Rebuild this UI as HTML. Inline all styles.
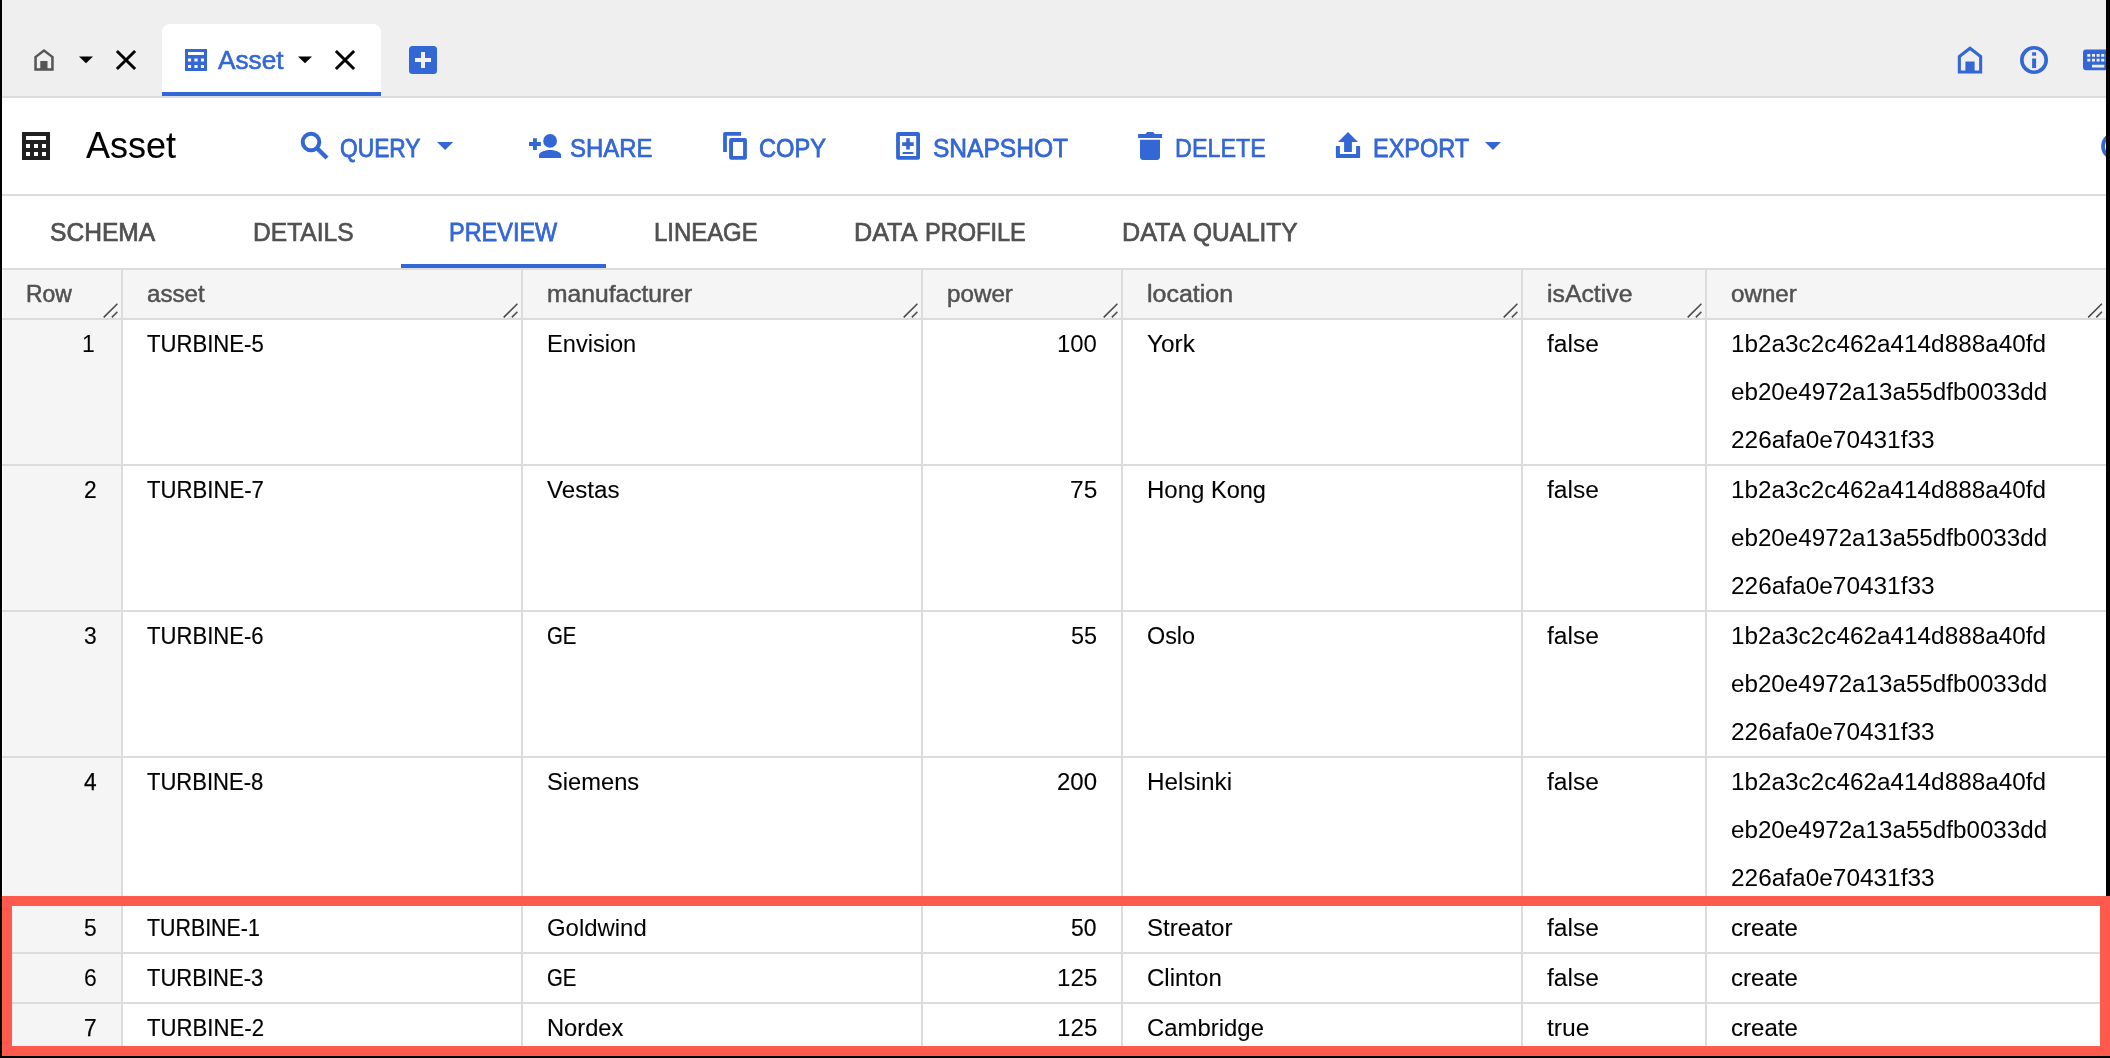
<!DOCTYPE html>
<html><head><meta charset="utf-8"><title>Asset</title>
<style>
html,body{margin:0;padding:0}
body{width:2110px;height:1058px;overflow:hidden;position:relative;background:#fff;font-family:"Liberation Sans",sans-serif}
.a{position:absolute}
.t{position:absolute;white-space:nowrap;line-height:1;transform-origin:0 0;-webkit-text-stroke-color:currentColor}
.g{background:#f5f5f5}
.b{background:#dcdcdc}
</style></head><body>
<div class="a" style="left:0px;top:0px;width:2110px;height:96px;background:#efefef"></div>
<div class="a" style="left:0px;top:96px;width:2110px;height:2px;background:#dcdcdc"></div>
<div class="a" style="left:162px;top:24px;width:219px;height:72px;background:#fff;border-radius:8px 8px 0 0"></div>
<div class="a" style="left:162px;top:92px;width:219px;height:4px;background:#3367d6"></div>
<div class="a" style="left:0px;top:194px;width:2110px;height:2px;background:#dcdcdc"></div>
<div class="a" style="left:0px;top:268px;width:2110px;height:2px;background:#dcdcdc"></div>
<div class="a" style="left:401px;top:264px;width:205px;height:4px;background:#3367d6"></div>
<div class="a g" style="left:3px;top:270px;width:2103px;height:48px;"></div>
<div class="a g" style="left:3px;top:320px;width:118px;height:738px;"></div>
<div class="a b" style="left:0px;top:318px;width:2110px;height:2px;"></div>
<div class="a b" style="left:0px;top:464px;width:2110px;height:2px;"></div>
<div class="a b" style="left:0px;top:610px;width:2110px;height:2px;"></div>
<div class="a b" style="left:0px;top:756px;width:2110px;height:2px;"></div>
<div class="a b" style="left:0px;top:902px;width:2110px;height:2px;"></div>
<div class="a b" style="left:0px;top:952px;width:2110px;height:2px;"></div>
<div class="a b" style="left:0px;top:1002px;width:2110px;height:2px;"></div>
<div class="a b" style="left:0px;top:1052px;width:2110px;height:2px;"></div>
<div class="a b" style="left:121px;top:270px;width:2px;height:788px;"></div>
<div class="a b" style="left:521px;top:270px;width:2px;height:788px;"></div>
<div class="a b" style="left:921px;top:270px;width:2px;height:788px;"></div>
<div class="a b" style="left:1121px;top:270px;width:2px;height:788px;"></div>
<div class="a b" style="left:1521px;top:270px;width:2px;height:788px;"></div>
<div class="a b" style="left:1705px;top:270px;width:2px;height:788px;"></div>
<div class="a" style="left:0;top:0;width:2110px;height:1058px;will-change:transform">
<span class="t" style="left:218.48px;top:47px;font-size:26.06px;color:#3367d6;-webkit-text-stroke-width:0.56px;transform:scaleX(1.0059)">Asset</span>
<span class="t" style="left:86.45px;top:127px;font-size:36.99px;color:#000;-webkit-text-stroke-width:0.08px;transform:scaleX(0.9739)">Asset</span>
<span class="t" style="left:340.47px;top:136px;font-size:25.76px;color:#3367d6;-webkit-text-stroke-width:0.79px;transform:scaleX(0.8838)">QUERY</span>
<span class="t" style="left:570.22px;top:136px;font-size:25.83px;color:#3367d6;-webkit-text-stroke-width:0.74px;transform:scaleX(0.9270)">SHARE</span>
<span class="t" style="left:758.81px;top:136px;font-size:25.75px;color:#3367d6;-webkit-text-stroke-width:0.80px;transform:scaleX(0.9189)">COPY</span>
<span class="t" style="left:933.26px;top:136px;font-size:25.77px;color:#3367d6;-webkit-text-stroke-width:0.78px;transform:scaleX(0.9527)">SNAPSHOT</span>
<span class="t" style="left:1174.76px;top:136px;font-size:25.93px;color:#3367d6;-webkit-text-stroke-width:0.66px;transform:scaleX(0.9019)">DELETE</span>
<span class="t" style="left:1372.82px;top:136px;font-size:25.76px;color:#3367d6;-webkit-text-stroke-width:0.79px;transform:scaleX(0.9111)">EXPORT</span>
<span class="t" style="left:50.19px;top:220px;font-size:25.83px;color:#515151;-webkit-text-stroke-width:0.74px;transform:scaleX(0.9523)">SCHEMA</span>
<span class="t" style="left:252.68px;top:220px;font-size:25.93px;color:#515151;-webkit-text-stroke-width:0.66px;transform:scaleX(0.9486)">DETAILS</span>
<span class="t" style="left:449.31px;top:220px;font-size:25.78px;color:#3367d6;-webkit-text-stroke-width:0.77px;transform:scaleX(0.9111)">PREVIEW</span>
<span class="t" style="left:654.26px;top:220px;font-size:25.84px;color:#515151;-webkit-text-stroke-width:0.73px;transform:scaleX(0.9256)">LINEAGE</span>
<span class="t" style="left:854.15px;top:220px;font-size:25.91px;color:#515151;-webkit-text-stroke-width:0.68px;transform:scaleX(0.9721)">DATA</span>
<span class="t" style="left:925.00px;top:220px;font-size:25.84px;color:#515151;-webkit-text-stroke-width:0.73px;transform:scaleX(0.9119)">PROFILE</span>
<span class="t" style="left:1122.15px;top:220px;font-size:25.91px;color:#515151;-webkit-text-stroke-width:0.68px;transform:scaleX(0.9721)">DATA</span>
<span class="t" style="left:1193.08px;top:220px;font-size:25.82px;color:#515151;-webkit-text-stroke-width:0.75px;transform:scaleX(0.9461)">QUALITY</span>
<span class="t" style="left:26.14px;top:282px;font-size:24.00px;color:#515151;-webkit-text-stroke-width:0.56px;transform:scaleX(0.9531)">Row</span>
<span class="t" style="left:147.22px;top:282px;font-size:24.10px;color:#515151;-webkit-text-stroke-width:0.48px;transform:scaleX(1.0012)">asset</span>
<span class="t" style="left:547.11px;top:282px;font-size:24.10px;color:#515151;-webkit-text-stroke-width:0.48px;transform:scaleX(1.0227)">manufacturer</span>
<span class="t" style="left:947.18px;top:282px;font-size:24.11px;color:#515151;-webkit-text-stroke-width:0.48px;transform:scaleX(1.0034)">power</span>
<span class="t" style="left:1147.29px;top:282px;font-size:24.11px;color:#515151;-webkit-text-stroke-width:0.48px;transform:scaleX(1.0360)">location</span>
<span class="t" style="left:1547.16px;top:282px;font-size:24.12px;color:#515151;-webkit-text-stroke-width:0.47px;transform:scaleX(1.0286)">isActive</span>
<span class="t" style="left:1731.21px;top:282px;font-size:24.12px;color:#515151;-webkit-text-stroke-width:0.47px;transform:scaleX(1.0028)">owner</span>
<span class="t" style="left:82.07px;top:332px;font-size:24.73px;color:#000;-webkit-text-stroke-width:0.00px;transform:scaleX(0.9300)">1</span>
<span class="t" style="left:147.20px;top:332px;font-size:24.47px;color:#000;-webkit-text-stroke-width:0.20px;transform:scaleX(0.9039)">TURBINE-5</span>
<span class="t" style="left:547.09px;top:332px;font-size:24.66px;color:#000;-webkit-text-stroke-width:0.06px;transform:scaleX(0.9576)">Envision</span>
<span class="t" style="left:1056.72px;top:332px;font-size:24.73px;color:#000;-webkit-text-stroke-width:0.00px;transform:scaleX(0.9674)">100</span>
<span class="t" style="left:1146.71px;top:332px;font-size:24.61px;color:#000;-webkit-text-stroke-width:0.09px;transform:scaleX(0.9904)">York</span>
<span class="t" style="left:1547.38px;top:332px;font-size:24.67px;color:#000;-webkit-text-stroke-width:0.04px;transform:scaleX(0.9993)">false</span>
<span class="t" style="left:1731.16px;top:332px;font-size:24.73px;color:#000;-webkit-text-stroke-width:0.00px;transform:scaleX(0.9837)">1b2a3c2c462a414d888a40fd</span>
<span class="t" style="left:1731.05px;top:380px;font-size:24.73px;color:#000;-webkit-text-stroke-width:0.00px;transform:scaleX(0.9787)">eb20e4972a13a55dfb0033dd</span>
<span class="t" style="left:1730.96px;top:428px;font-size:24.73px;color:#000;-webkit-text-stroke-width:0.00px;transform:scaleX(0.9875)">226afa0e70431f33</span>
<span class="t" style="left:84.03px;top:478px;font-size:24.42px;color:#000;-webkit-text-stroke-width:0.24px;transform:scaleX(0.9300)">2</span>
<span class="t" style="left:147.20px;top:478px;font-size:24.46px;color:#000;-webkit-text-stroke-width:0.21px;transform:scaleX(0.9053)">TURBINE-7</span>
<span class="t" style="left:547.24px;top:478px;font-size:24.63px;color:#000;-webkit-text-stroke-width:0.08px;transform:scaleX(0.9824)">Vestas</span>
<span class="t" style="left:1069.74px;top:478px;font-size:24.73px;color:#000;-webkit-text-stroke-width:0.00px;transform:scaleX(0.9955)">75</span>
<span class="t" style="left:1147.04px;top:478px;font-size:24.68px;color:#000;-webkit-text-stroke-width:0.04px;transform:scaleX(0.9732)">Hong</span>
<span class="t" style="left:1210.63px;top:478px;font-size:24.56px;color:#000;-webkit-text-stroke-width:0.13px;transform:scaleX(0.9583)">Kong</span>
<span class="t" style="left:1547.38px;top:478px;font-size:24.67px;color:#000;-webkit-text-stroke-width:0.04px;transform:scaleX(0.9993)">false</span>
<span class="t" style="left:1731.16px;top:478px;font-size:24.73px;color:#000;-webkit-text-stroke-width:0.00px;transform:scaleX(0.9837)">1b2a3c2c462a414d888a40fd</span>
<span class="t" style="left:1731.05px;top:526px;font-size:24.73px;color:#000;-webkit-text-stroke-width:0.00px;transform:scaleX(0.9787)">eb20e4972a13a55dfb0033dd</span>
<span class="t" style="left:1730.96px;top:574px;font-size:24.73px;color:#000;-webkit-text-stroke-width:0.00px;transform:scaleX(0.9875)">226afa0e70431f33</span>
<span class="t" style="left:83.73px;top:624px;font-size:24.60px;color:#000;-webkit-text-stroke-width:0.10px;transform:scaleX(0.9300)">3</span>
<span class="t" style="left:147.20px;top:624px;font-size:24.48px;color:#000;-webkit-text-stroke-width:0.19px;transform:scaleX(0.9028)">TURBINE-6</span>
<span class="t" style="left:547.43px;top:624px;font-size:24.44px;color:#000;-webkit-text-stroke-width:0.23px;transform:scaleX(0.8318)">GE</span>
<span class="t" style="left:1070.96px;top:624px;font-size:24.67px;color:#000;-webkit-text-stroke-width:0.05px;transform:scaleX(0.9515)">55</span>
<span class="t" style="left:1147.27px;top:624px;font-size:24.62px;color:#000;-webkit-text-stroke-width:0.08px;transform:scaleX(0.9500)">Oslo</span>
<span class="t" style="left:1547.38px;top:624px;font-size:24.67px;color:#000;-webkit-text-stroke-width:0.04px;transform:scaleX(0.9993)">false</span>
<span class="t" style="left:1731.16px;top:624px;font-size:24.73px;color:#000;-webkit-text-stroke-width:0.00px;transform:scaleX(0.9837)">1b2a3c2c462a414d888a40fd</span>
<span class="t" style="left:1731.05px;top:672px;font-size:24.73px;color:#000;-webkit-text-stroke-width:0.00px;transform:scaleX(0.9787)">eb20e4972a13a55dfb0033dd</span>
<span class="t" style="left:1730.96px;top:720px;font-size:24.73px;color:#000;-webkit-text-stroke-width:0.00px;transform:scaleX(0.9875)">226afa0e70431f33</span>
<span class="t" style="left:84.10px;top:770px;font-size:24.40px;color:#000;-webkit-text-stroke-width:0.25px;transform:scaleX(0.9300)">4</span>
<span class="t" style="left:147.21px;top:770px;font-size:24.45px;color:#000;-webkit-text-stroke-width:0.21px;transform:scaleX(0.9015)">TURBINE-8</span>
<span class="t" style="left:546.63px;top:770px;font-size:24.61px;color:#000;-webkit-text-stroke-width:0.09px;transform:scaleX(0.9626)">Siemens</span>
<span class="t" style="left:1056.54px;top:770px;font-size:24.58px;color:#000;-webkit-text-stroke-width:0.11px;transform:scaleX(0.9768)">200</span>
<span class="t" style="left:1147.03px;top:770px;font-size:24.66px;color:#000;-webkit-text-stroke-width:0.05px;transform:scaleX(0.9851)">Helsinki</span>
<span class="t" style="left:1547.38px;top:770px;font-size:24.67px;color:#000;-webkit-text-stroke-width:0.04px;transform:scaleX(0.9993)">false</span>
<span class="t" style="left:1731.16px;top:770px;font-size:24.73px;color:#000;-webkit-text-stroke-width:0.00px;transform:scaleX(0.9837)">1b2a3c2c462a414d888a40fd</span>
<span class="t" style="left:1731.05px;top:818px;font-size:24.73px;color:#000;-webkit-text-stroke-width:0.00px;transform:scaleX(0.9787)">eb20e4972a13a55dfb0033dd</span>
<span class="t" style="left:1730.96px;top:866px;font-size:24.73px;color:#000;-webkit-text-stroke-width:0.00px;transform:scaleX(0.9875)">226afa0e70431f33</span>
<span class="t" style="left:84.38px;top:916px;font-size:24.57px;color:#000;-webkit-text-stroke-width:0.12px;transform:scaleX(0.9300)">5</span>
<span class="t" style="left:147.23px;top:916px;font-size:24.43px;color:#000;-webkit-text-stroke-width:0.23px;transform:scaleX(0.8750)">TURBINE-1</span>
<span class="t" style="left:547.20px;top:916px;font-size:24.68px;color:#000;-webkit-text-stroke-width:0.04px;transform:scaleX(0.9694)">Goldwind</span>
<span class="t" style="left:1071.01px;top:916px;font-size:24.52px;color:#000;-webkit-text-stroke-width:0.16px;transform:scaleX(0.9347)">50</span>
<span class="t" style="left:1146.61px;top:916px;font-size:24.63px;color:#000;-webkit-text-stroke-width:0.08px;transform:scaleX(0.9760)">Streator</span>
<span class="t" style="left:1547.38px;top:916px;font-size:24.67px;color:#000;-webkit-text-stroke-width:0.04px;transform:scaleX(0.9993)">false</span>
<span class="t" style="left:1731.06px;top:916px;font-size:24.60px;color:#000;-webkit-text-stroke-width:0.10px;transform:scaleX(0.9773)">create</span>
<span class="t" style="left:83.97px;top:966px;font-size:24.73px;color:#000;-webkit-text-stroke-width:0.00px;transform:scaleX(0.9300)">6</span>
<span class="t" style="left:147.20px;top:966px;font-size:24.46px;color:#000;-webkit-text-stroke-width:0.21px;transform:scaleX(0.9005)">TURBINE-3</span>
<span class="t" style="left:547.43px;top:966px;font-size:24.44px;color:#000;-webkit-text-stroke-width:0.23px;transform:scaleX(0.8318)">GE</span>
<span class="t" style="left:1056.70px;top:966px;font-size:24.73px;color:#000;-webkit-text-stroke-width:0.00px;transform:scaleX(0.9799)">125</span>
<span class="t" style="left:1147.18px;top:966px;font-size:24.61px;color:#000;-webkit-text-stroke-width:0.09px;transform:scaleX(0.9756)">Clinton</span>
<span class="t" style="left:1547.38px;top:966px;font-size:24.67px;color:#000;-webkit-text-stroke-width:0.04px;transform:scaleX(0.9993)">false</span>
<span class="t" style="left:1731.06px;top:966px;font-size:24.60px;color:#000;-webkit-text-stroke-width:0.10px;transform:scaleX(0.9773)">create</span>
<span class="t" style="left:83.85px;top:1016px;font-size:24.40px;color:#000;-webkit-text-stroke-width:0.25px;transform:scaleX(0.9300)">7</span>
<span class="t" style="left:147.20px;top:1016px;font-size:24.46px;color:#000;-webkit-text-stroke-width:0.21px;transform:scaleX(0.9065)">TURBINE-2</span>
<span class="t" style="left:547.13px;top:1016px;font-size:24.54px;color:#000;-webkit-text-stroke-width:0.14px;transform:scaleX(0.9659)">Nordex</span>
<span class="t" style="left:1056.70px;top:1016px;font-size:24.73px;color:#000;-webkit-text-stroke-width:0.00px;transform:scaleX(0.9799)">125</span>
<span class="t" style="left:1147.17px;top:1016px;font-size:24.68px;color:#000;-webkit-text-stroke-width:0.04px;transform:scaleX(0.9691)">Cambridge</span>
<span class="t" style="left:1546.76px;top:1016px;font-size:24.68px;color:#000;-webkit-text-stroke-width:0.04px;transform:scaleX(1.0012)">true</span>
<span class="t" style="left:1731.06px;top:1016px;font-size:24.60px;color:#000;-webkit-text-stroke-width:0.10px;transform:scaleX(0.9773)">create</span>
</div>
<svg class="a" style="left:0;top:0" width="2110" height="1058" viewBox="0 0 2110 1058">
<!-- tab bar: gray home -->
<g fill="#555">
<path fill-rule="evenodd" d="M34.3 56.4 L44 49 L53.7 56.4 V70.8 H34.3 Z M36.8 57.6 V68.3 H40.3 V61 H47.5 V68.3 H51.2 V57.6 L44 52.1 Z"/>
</g>
<!-- dropdown arrows black -->
<path d="M79 56.4 H93 L86 63.3 Z" fill="#000"/>
<path d="M298 56.4 H312 L305 63.3 Z" fill="#000"/>
<!-- X icons -->
<g stroke="#000" stroke-width="3" fill="none">
<path d="M116.9 51 L135.1 69 M135.1 51 L116.9 69"/>
<path d="M335.9 51 L354.1 69 M354.1 51 L335.9 69"/>
</g>
<!-- blue table icon small -->
<path fill="#3367d6" fill-rule="evenodd" d="M185 49 H207 V71 H185 Z M188 52 V55.1 H204 V52 Z M188 58.6 V61.6 H191.1 V58.6 Z M194.4 58.6 V61.6 H197.6 V58.6 Z M200.9 58.6 V61.6 H204 V58.6 Z M188 65 V68 H191.1 V65 Z M194.4 65 V68 H197.6 V65 Z M200.9 65 V68 H204 V65 Z"/>
<!-- plus box -->
<rect x="409" y="46" width="28" height="28" rx="3.5" fill="#3367d6"/>
<path d="M415 58 H421 V52 H425 V58 H431 V62 H425 V68 H421 V62 H415 Z" fill="#f1f1f1"/>
<!-- top-right blue home -->
<path fill="#3367d6" fill-rule="evenodd" d="M1957.8 55.8 L1970 46.3 L1982.2 55.8 V73.6 H1957.8 Z M1960.9 57.3 V70.5 H1965.4 V61.6 H1974.6 V70.5 H1979.1 V57.3 L1970 50.2 Z"/>
<!-- info -->
<circle cx="2034" cy="60" r="12.2" fill="none" stroke="#3367d6" stroke-width="3.6"/>
<rect x="2032.1" y="52.3" width="4" height="3.4" fill="#3367d6"/>
<rect x="2032.1" y="58.5" width="4" height="9.6" fill="#3367d6"/>
<!-- keyboard -->
<path fill="#3367d6" fill-rule="evenodd" d="M2086 49.4 H2112 V70.2 H2086 Q2083 70.2 2083 67.2 V52.4 Q2083 49.4 2086 49.4 Z
M2087.3 54 h3 v2.8 h-3 Z M2092 54 h3 v2.8 h-3 Z M2096.6 54 h3 v2.8 h-3 Z M2101.2 54 h3 v2.8 h-3 Z M2105.8 54 h3 v2.8 h-3 Z
M2087.3 58.7 h3 v2.8 h-3 Z M2092 58.7 h3 v2.8 h-3 Z M2096.6 58.7 h3 v2.8 h-3 Z M2101.2 58.7 h3 v2.8 h-3 Z M2105.8 58.7 h3 v2.8 h-3 Z
M2092 64.7 h12.3 v2.8 h-12.3 Z"/>
<!-- big black table icon -->
<path fill="#212121" fill-rule="evenodd" d="M22 132 H50 V160 H22 Z M26 136 V140 H46 V136 Z M26 144.1 V148.1 H30 V144.1 Z M34 144.1 V148.1 H38 V144.1 Z M42 144.1 V148.1 H46 V144.1 Z M26 152 V156 H30 V152 Z M34 152 V156 H38 V152 Z M42 152 V156 H46 V152 Z"/>
<!-- search -->
<circle cx="311" cy="142" r="8.3" fill="none" stroke="#3367d6" stroke-width="4"/>
<path d="M317 148.2 L327 158" stroke="#3367d6" stroke-width="4.4" fill="none"/>
<!-- blue dropdown arrows -->
<path d="M437 142 H453.2 L445.1 150 Z" fill="#3367d6"/>
<path d="M1485 142 H1501 L1493 150 Z" fill="#3367d6"/>
<!-- share / person add -->
<g fill="#3367d6">
<path d="M529 142.1 H533 V138.2 H536.9 V142.1 H540.9 V146.1 H536.9 V149.9 H533 V146.1 H529 Z"/>
<circle cx="550.1" cy="140.9" r="6.9"/>
<path d="M539 158 V155.2 C539 151.6 546.2 150 550.1 150 C554 150 561.1 151.6 561.1 155.2 V158 Z"/>
</g>
<!-- copy -->
<path fill="#3367d6" d="M723.1 152 V134 Q723.1 132 725.1 132 H741.1 V135.8 H726.9 V152 Z"/>
<path fill="#3367d6" fill-rule="evenodd" d="M731.1 138 H744.9 Q746.9 138 746.9 140 V157.8 Q746.9 159.8 744.9 159.8 H731.1 Q729.1 159.8 729.1 157.8 V140 Q729.1 138 731.1 138 Z M733 141.9 V155.9 H743.1 V141.9 Z"/>
<!-- snapshot -->
<path fill="#3367d6" fill-rule="evenodd" d="M898.1 132 H918 Q920 132 920 134 V157.8 Q920 159.8 918 159.8 H898.1 Q896.1 159.8 896.1 157.8 V134 Q896.1 132 898.1 132 Z M899.9 135.9 V155.9 H916.2 V135.9 Z"/>
<path fill="#3367d6" d="M902.2 142.3 H906.2 V138.3 H909.8 V142.3 H913.7 V145.9 H909.8 V149.5 H906.2 V145.9 H902.2 Z M902.6 151.9 H913.4 V153.9 H902.6 Z"/>
<!-- delete -->
<path fill="#3367d6" d="M1138.1 134 H1145.6 L1147.2 132 H1153.2 L1154.8 134 H1162.1 V137.9 H1138.1 Z M1140 139.8 H1160 V156.8 Q1160 159.9 1156.9 159.9 H1143.1 Q1140 159.9 1140 156.8 Z"/>
<!-- export -->
<path fill="#3367d6" d="M1348 132 L1358 141.9 H1351.9 V151.9 H1344.1 V141.9 H1338 Z M1335.9 146 H1339.9 V154 H1356.1 V146 H1360.1 V158 H1335.9 Z"/>
<!-- partial circle at right of toolbar -->
<circle cx="2115.3" cy="146.3" r="12.3" fill="none" stroke="#3367d6" stroke-width="3.7"/>
<!-- resize handles -->
<g stroke="#484848" stroke-width="1.5" fill="none">
<path d="M103.7 317.4 L117.4 303.7 M111.8 317.4 L117.4 311.8"/>
<path d="M503.7 317.4 L517.4 303.7 M511.8 317.4 L517.4 311.8"/>
<path d="M903.7 317.4 L917.4 303.7 M911.8 317.4 L917.4 311.8"/>
<path d="M1103.7 317.4 L1117.4 303.7 M1111.8 317.4 L1117.4 311.8"/>
<path d="M1503.7 317.4 L1517.4 303.7 M1511.8 317.4 L1517.4 311.8"/>
<path d="M1687.7 317.4 L1701.4 303.7 M1695.8 317.4 L1701.4 311.8"/>
<path d="M2088.2 317.4 L2101.9 303.7 M2096.3 317.4 L2101.9 311.8"/>
</g>
</svg>

<div class="a" style="left:2px;top:896px;width:2088px;height:140px;border:10px solid #ff5a4b"></div>
<div class="a" style="left:0px;top:0px;width:2px;height:1058px;background:#000"></div>
<div class="a" style="left:2106px;top:0px;width:4px;height:896px;background:#000"></div>
<div class="a" style="left:0px;top:1056px;width:2110px;height:2px;background:#000"></div>
</body></html>
